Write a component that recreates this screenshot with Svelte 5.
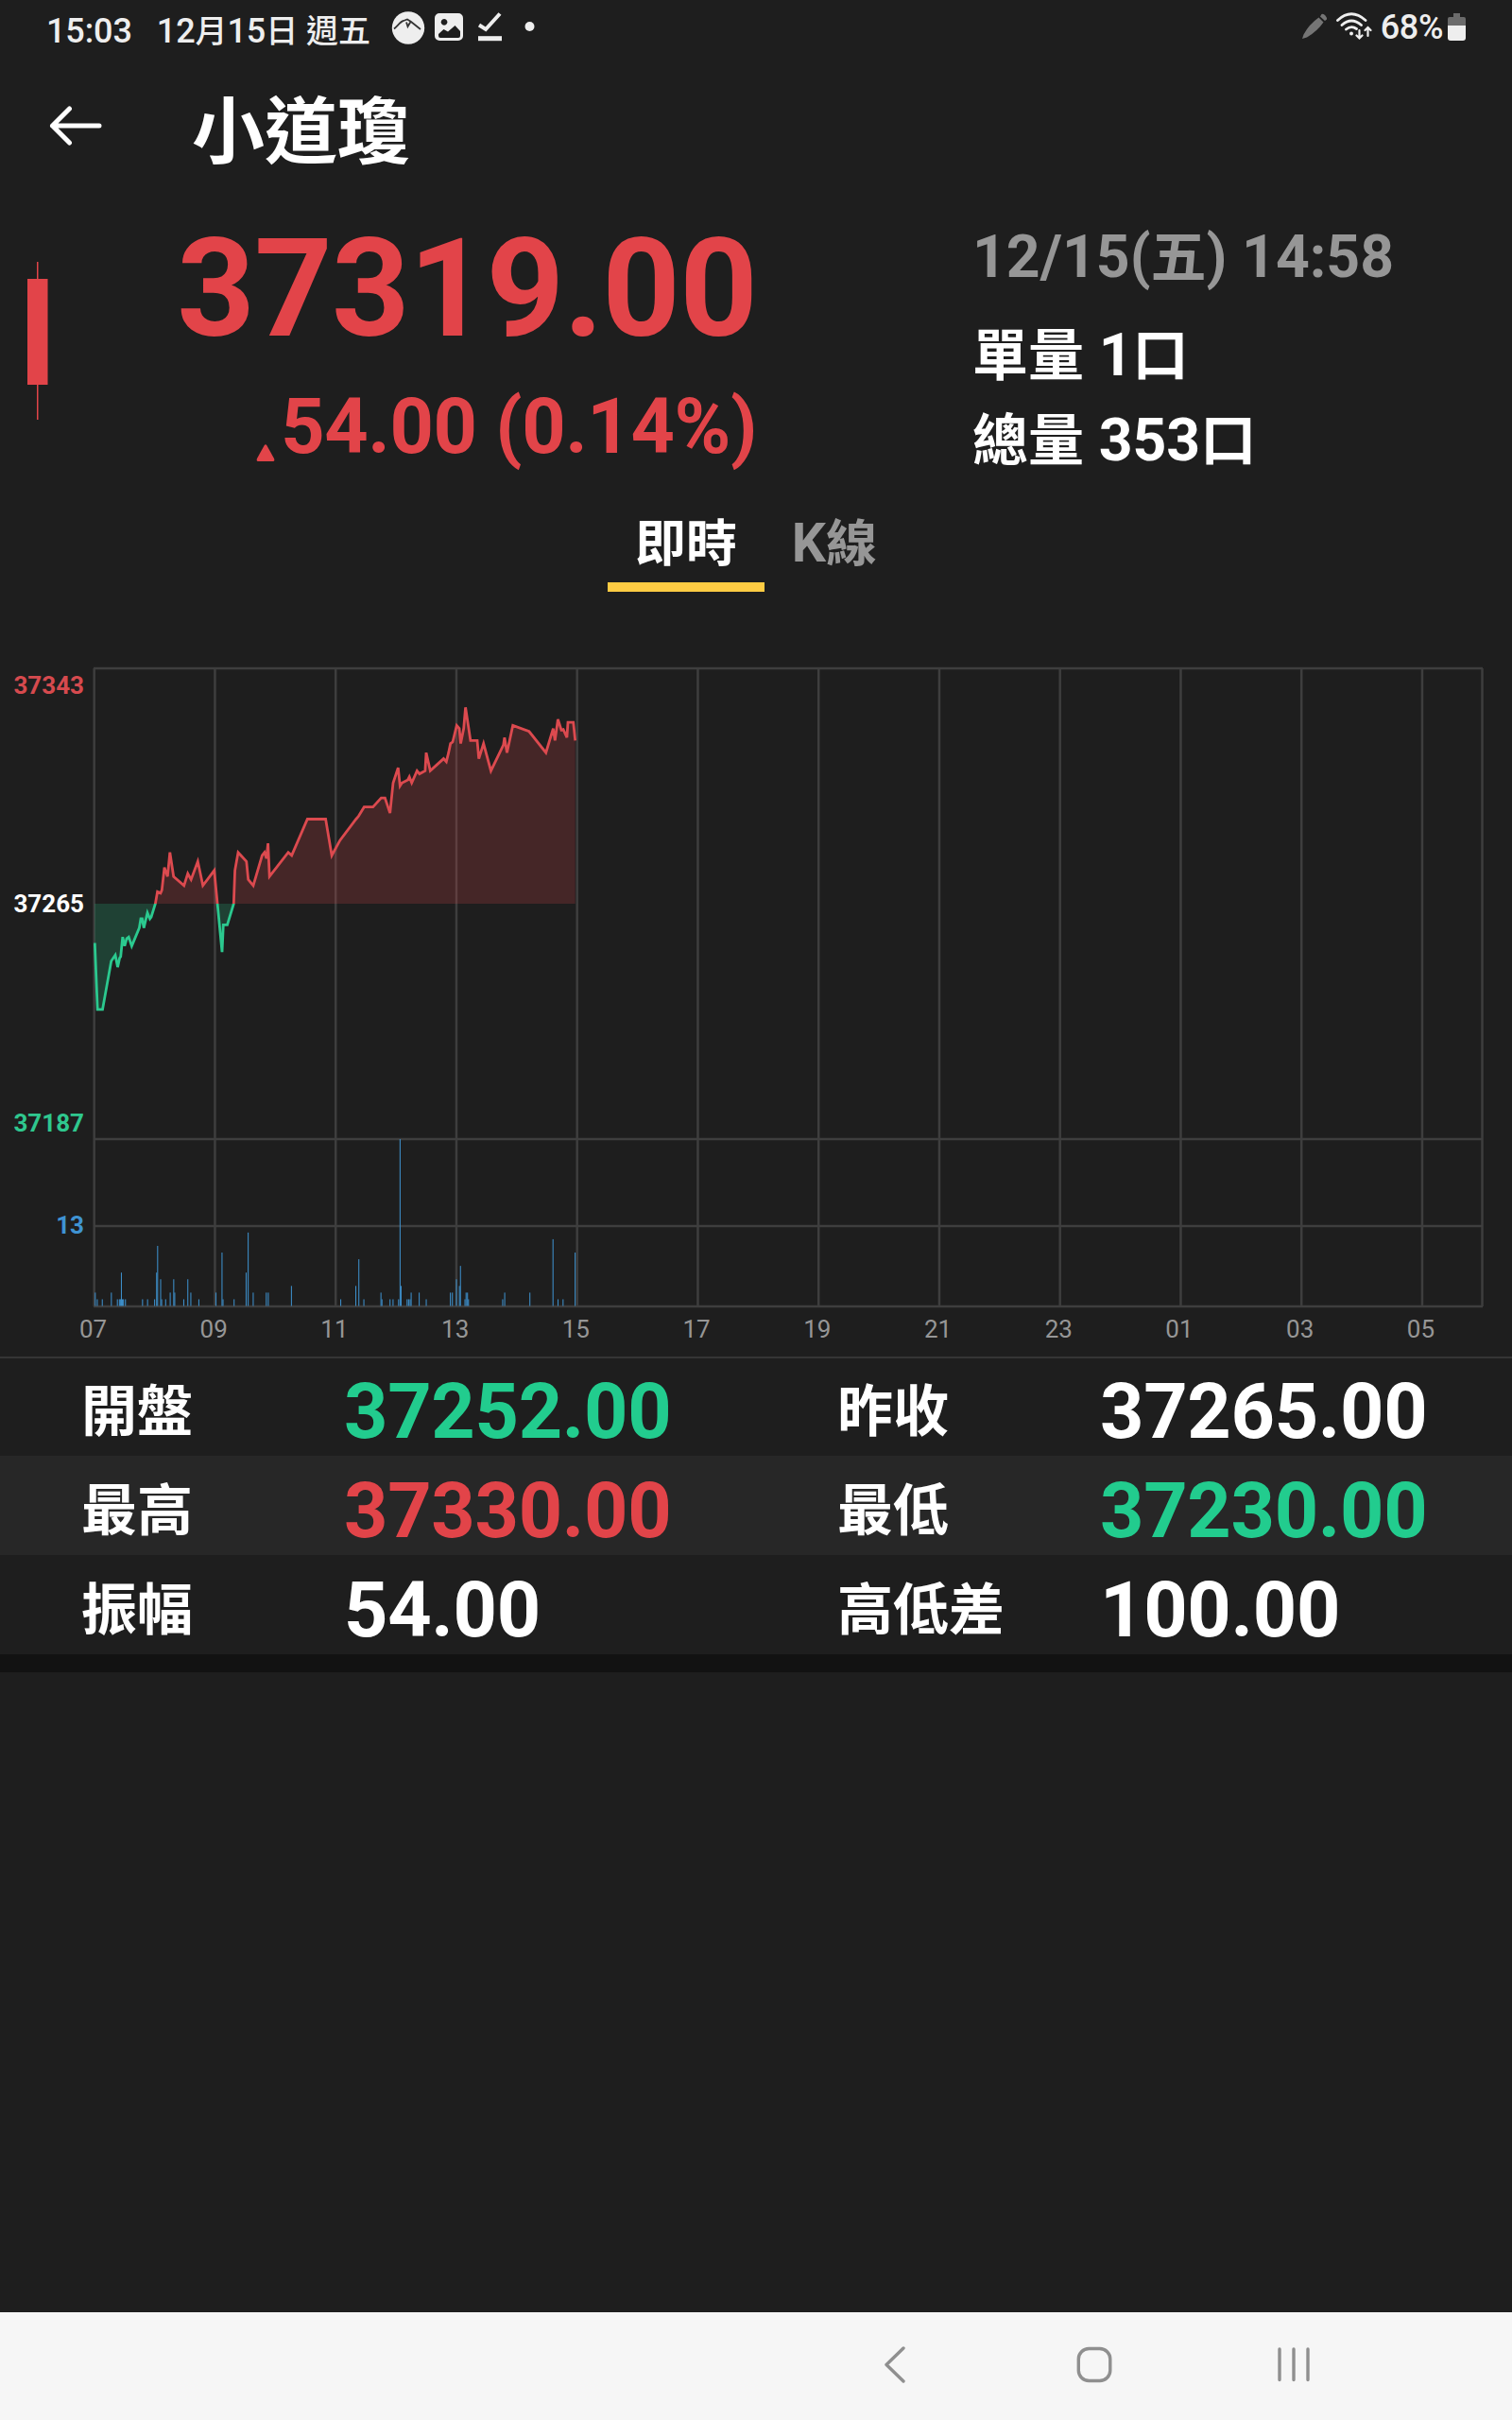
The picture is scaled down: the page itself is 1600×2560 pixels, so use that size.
<script lang="ts">
	type Cell = { label: string; value: string; tone?: 'up' | 'down' };

	const rows: Cell[][] = [
		[
			{ label: '開盤', value: '37252.00', tone: 'down' },
			{ label: '昨收', value: '37265.00' }
		],
		[
			{ label: '最高', value: '37330.00', tone: 'up' },
			{ label: '最低', value: '37230.00', tone: 'down' }
		],
		[
			{ label: '振幅', value: '54.00' },
			{ label: '高低差', value: '100.00' }
		]
	];

	const hours = ['07', '09', '11', '13', '15', '17', '19', '21', '23', '01', '03', '05'];

	// [minutes since 07:00, price - 37000]
	const prices: [number, number][] = [
		[0.3, 252], [3, 230], [8, 230], [16.6, 246], [20.7, 248], [23, 244], [25, 247], [26, 247.5],
		[28, 254], [30, 251], [32, 253.5], [34, 254], [37, 251], [44.5, 257], [46, 260], [47.4, 260],
		[49, 257], [52.6, 262], [55, 260], [56.4, 260.6], [60.5, 265], [62.6, 269], [65.7, 268.5],
		[67, 269.5], [69.5, 277], [72.6, 274], [75, 282], [78.6, 274], [89, 271], [92.7, 275],
		[96, 273], [102.7, 279], [107.7, 271], [119, 276], [126.8, 249], [128, 258], [132, 258],
		[138.4, 265], [139.6, 276], [142.8, 282], [151, 279], [152.8, 273], [157.8, 271],
		[166.6, 281], [169, 282], [171, 280], [172.5, 285], [174, 274], [192.6, 282], [196, 281],
		[211.6, 293], [229.8, 293], [235.9, 281], [244, 286], [260, 293], [262.5, 294], [268, 297],
		[276.8, 297], [285, 300], [288.7, 300], [293.7, 295], [296.8, 305], [301.8, 310],
		[303.7, 304], [305.6, 305], [311.5, 306], [313, 307], [315.3, 305], [320.6, 309], [323, 308],
		[328.7, 309], [329.7, 315], [333.7, 309], [347, 313], [349.7, 312], [352, 315],
		[353.8, 318], [356, 318.5], [360, 324], [362.6, 323], [364, 318], [367, 323], [368.8, 330],
		[373.8, 319], [380.4, 319], [382, 313], [386.7, 318], [394, 309], [406.4, 317.5],
		[407.6, 320], [410, 315], [415.8, 324], [432, 322], [448.7, 315], [455.9, 323],
		[457.7, 319], [460.6, 326], [464, 322.5], [466, 322.7], [469.6, 320], [470.6, 325],
		[476, 325], [477.8, 319]
	];

	// [minutes since 07:00, contracts]
	const volumes: [number, number][] = [
		[1, 3], [3, 2], [8, 2], [17, 3], [23, 2], [25, 2], [26, 2], [27, 6], [28, 2], [29, 2],
		[31, 2], [48, 2], [53, 2], [60, 2], [62, 6], [63, 10], [66, 5], [67, 2], [71, 2], [75.5, 3],
		[79, 5], [80, 3], [89, 2], [93, 5], [96, 3], [104, 2], [121, 3], [127, 9], [128, 2],
		[139, 2], [151, 6], [153, 12], [158, 3], [171, 3], [173, 3], [196, 4], [245, 2], [260, 4],
		[263, 8], [268, 2], [285, 3], [286, 2], [294, 2], [297, 2], [302.5, 2], [304, 26],
		[305, 4], [311, 2], [312.5, 2], [314, 2], [315, 3], [323, 3], [330, 2], [354, 3],
		[356, 3], [360, 5], [363, 4], [364, 7], [368.5, 2], [369.6, 3], [371, 3], [372, 2],
		[406, 2], [408, 3], [433, 3], [456, 11], [461, 2], [466, 2], [478, 9]
	];

	const left = 100;
	const right = 1569;
	const top = 17;
	const base = 266;
	const mid = 515;
	const bottom = 692;

	const x = (t: number) => left + t * 1.0646;
	const y = (p: number) => base - (p - 265) * 3.196;

	const points = prices.map(([t, p]) => `${x(t).toFixed(1)},${y(p).toFixed(1)}`).join(' ');
	const area = `${left},${base} ${points} ${x(477.8).toFixed(1)},${base}`;
</script>

<div class="screen">
	<div class="status">
		<div class="status-left">
			<span class="clock">15:03</span>
			<span>12<i>月</i>15<i>日</i> <i>週五</i></span>
			<svg class="status-icons" viewBox="0 0 154 36">
				<circle cx="18" cy="18.5" r="17.2" fill="#eee" />
				<path
					d="M3 19.500C8 15 10 11.500 13 11L17 9.500 21 12 31 20M20.500 12 17.500 17 16 12.500"
					fill="none"
					stroke="#333"
					stroke-width="1.800"
				/>
				<path
					fill-rule="evenodd"
					fill="#eee"
					d="M51 3H71a5 5 0 0 1 5 5V27a5 5 0 0 1-5 5H51a5 5 0 0 1-5-5V8a5 5 0 0 1 5-5ZM56 9a3.4 3.4 0 1 0 .1 0ZM50 25V27a2 2 0 0 0 2 2H71a2 2 0 0 0 2-2V22L67.500 16 60 22.500 55.500 20Z"
				/>
				<path d="M93 15.500 100 20 115 3.500" fill="none" stroke="#eee" stroke-width="4" />
				<path d="M92 29.700H117" stroke="#eee" stroke-width="5" />
				<circle cx="146.500" cy="17" r="5" fill="#eee" />
			</svg>
		</div>
		<div class="status-right">
			<svg class="pen" viewBox="0 0 28 28">
				<path d="M1 27 2.500 22.500Q8 12 18.500 4.500L23.500 9.500Q17 19 6 25.500ZM20 3.500l1.500-2.500q2-1 4 1.500t1.500 4L25 8Z" fill="#757575" />
			</svg>
			<svg class="wifi" viewBox="0 0 38 30" fill="none" stroke="#eee" stroke-width="2.800" stroke-linecap="round">
				<path d="M1.500 8.500Q16-5 31 8.500M6 13.500Q16 4.500 26.500 13.500M10.500 18Q16 13.500 21.500 17.500" />
				<circle cx="16" cy="22.500" r="2" fill="#eee" stroke="none" />
				<path d="M24.500 19V27M21.500 24.500 24.500 27.500 27.500 24.500M33.500 25V17M30.500 19 33.500 16 36.500 19" stroke-width="2.200" />
			</svg>
			<span>68%</span>
			<svg class="battery" viewBox="0 0 19 29">
				<path d="M6 0H13V4H17a2 2 0 0 1 2 2V13H0V6a2 2 0 0 1 2-2H6Z" fill="#6b6b6b" />
				<path d="M0 13H19V26a3 3 0 0 1-3 3H3a3 3 0 0 1-3-3Z" fill="#eee" />
			</svg>
		</div>
	</div>

	<header class="header">
		<svg class="back" viewBox="0 0 56 44" fill="none" stroke="#fff" stroke-width="5" stroke-linecap="round" stroke-linejoin="round">
			<path d="M53 22H3.500M21.500 4 3.500 22 21.500 40" />
		</svg>
		<h1>小道瓊</h1>
	</header>

	<section class="quote">
		<svg class="candle" viewBox="0 0 22 168" fill="#e24449">
			<rect x="10" y="0" width="1.500" height="167" />
			<rect x="0" y="18" width="21.500" height="112" />
		</svg>
		<div class="last up">
			<div class="price">37319.00</div>
			<div class="change">
				<svg viewBox="0 0 20 18"><path d="M8.500 1.500Q10-1 11.500 1.500L19 15Q20 18 18 18H2Q0 18 1 15Z" fill="#e24449" /></svg>
				<span>54.00 (0.14%)</span>
			</div>
		</div>
		<div class="info">
			<div class="time">12/15(<i>五</i>) 14:58</div>
			<div><i>單量</i> 1<i>口</i></div>
			<div><i>總量</i> 353<i>口</i></div>
		</div>
	</section>

	<nav class="tabs">
		<div class="tab active"><i>即時</i></div>
		<div class="tab">K<i>線</i></div>
	</nav>

	<svg class="chart" viewBox="0 0 1600 745">
		<clipPath id="above"><rect x={left} y={top} width={right - left} height={base - top} /></clipPath>
		<clipPath id="below"><rect x={left - 1} y={base} width={right - left} height={mid - base} /></clipPath>

		<g class="grid">
			{#each hours as _, i}
				<path d="M{99.7 + i * 127.75} {top}V{bottom}" />
			{/each}
			<path d="M{right - 0.5} {top}V{bottom}" />
			{#each [top, mid, 607, bottom] as line}
				<path d="M99 {line}H{right}" />
			{/each}
		</g>

		<g clip-path="url(#above)">
			<polygon class="area rise" points={area} />
			<polyline class="line rise" {points} />
		</g>
		<g clip-path="url(#below)">
			<polygon class="area fall" points={area} />
			<polyline class="line fall" {points} />
		</g>

		<g class="volume">
			{#each volumes as [t, v]}
				<rect x={x(t) - 0.8} y={bottom - 0.5 - (v - 1) * 7.06} width="1.06" height={(v - 1) * 7.06} />
			{/each}
		</g>

		<g class="scale">
			<text x="89" y="44" fill="#d64a4e">37343</text>
			<text x="89" y="275" fill="#fff">37265</text>
			<text x="89" y="507" fill="#2fc78e">37187</text>
			<text x="89" y="615" fill="#3f93d2">13</text>
		</g>
		<g class="hours">
			{#each hours as hour, i}
				<text x={98.5 + i * 127.72} y="725">{hour}</text>
			{/each}
		</g>
	</svg>

	<section class="stats">
		{#each rows as row}
			<div class="row">
				{#each row as cell}
					<div class="cell">
						<span class="label">{cell.label}</span>
						<span class="value {cell.tone ?? ''}">{cell.value}</span>
					</div>
				{/each}
			</div>
		{/each}
	</section>

	<footer class="navbar">
		<svg viewBox="0 0 40 40"><path d="M29 3 11 20.500 29 38" /></svg>
		<svg viewBox="0 0 40 40"><rect x="3.300" y="3.500" width="33.500" height="34" rx="11" /></svg>
		<svg viewBox="0 0 40 40"><path d="M5 4V36.500M20 4V36.500M35 4V36.500" /></svg>
	</footer>
</div>

<style>
	:global(body) {
		background: #1e1e1e;
	}

	.screen {
		width: 1600px;
		height: 2560px;
		display: flex;
		flex-direction: column;
		overflow: hidden;
		background: #1e1e1e;
		color: #fff;
		font-family: Roboto, 'Noto Sans CJK TC', sans-serif;
		font-weight: 500;
	}

	i {
		font-style: normal;
		font-size: 0.945em;
		line-height: 1;
	}

	svg {
		display: block;
		flex-shrink: 0;
	}

	.up {
		color: #e24449;
	}

	.down {
		color: #22cc8e;
	}

	.status {
		height: 66px;
		display: flex;
		justify-content: space-between;
		padding: 0 49px 0 49px;
		color: #eee;
		font-size: 36px;
		line-height: 66px;
		white-space: nowrap;
	}

	.status-left {
		display: flex;
		letter-spacing: -0.1px;
	}

	.clock {
		margin-right: 26px;
	}

	.status-icons {
		width: 154px;
		height: 36px;
		margin: 11px 0 0 22px;
	}

	.status-right {
		display: flex;
		line-height: 59px;
	}

	.status-right span {
		letter-spacing: -0.4px;
	}

	.pen {
		width: 28px;
		height: 28px;
		margin: 14px 9px 0 0;
	}

	.wifi {
		width: 38px;
		height: 30px;
		margin: 13px 9px 0 0;
	}

	.battery {
		width: 19px;
		height: 29px;
		margin: 14px 0 0 5px;
	}

	.header {
		height: 133px;
		display: flex;
		align-items: center;
		padding-left: 52px;
	}

	.back {
		width: 56px;
		height: 44px;
	}

	h1 {
		margin: 0 0 0 95px;
		padding-top: 17px;
		font-size: 77px;
		font-weight: 700;
		line-height: 90px;
	}

	.quote {
		height: 341px;
		display: flex;
	}

	.candle {
		width: 22px;
		height: 168px;
		margin: 78px 0 0 29px;
	}

	.last {
		width: 750px;
		padding-top: 47px;
		text-align: right;
		font-weight: 700;
		letter-spacing: -0.006em;
	}

	.price {
		font-size: 144px;
		line-height: 120px;
		letter-spacing: -0.8px;
	}

	.change {
		display: flex;
		justify-content: flex-end;
		margin-top: 36px;
		font-size: 81px;
		line-height: 100px;
		letter-spacing: -0.4px;
	}

	.change svg {
		width: 20px;
		height: 18px;
		margin: 68px 6px 0 0;
	}

	.info {
		margin-left: 228px;
		padding-top: 28px;
		font-size: 62.5px;
		line-height: 90px;
		font-weight: 700;
	}

	.time {
		margin-bottom: 14px;
		color: #969696;
	}

	.tabs {
		display: flex;
		justify-content: center;
		height: 86px;
		font-size: 57px;
		line-height: 69px;
		font-weight: 700;
	}

	.tab {
		box-sizing: border-box;
		padding: 0 29px;
		border-bottom: 10px solid transparent;
		color: #969696;
	}

	.tab.active {
		color: #fff;
		border-color: #ffcc43;
	}

	.chart {
		width: 1600px;
		height: 745px;
		margin-top: 64px;
	}

	.grid {
		stroke: #3e3e3e;
		stroke-width: 2.5;
	}

	.area {
		opacity: 0.2;
	}

	.area.rise {
		fill: #e24449;
	}

	.area.fall {
		fill: #22cc8e;
	}

	.line {
		fill: none;
		stroke-width: 2.8;
	}

	.line.rise {
		stroke: #dc4a4f;
	}

	.line.fall {
		stroke: #2bc98f;
	}

	.volume {
		fill: #3d8ec9;
	}

	.scale {
		font-size: 26px;
		font-weight: 700;
		text-anchor: end;
	}

	.hours {
		fill: #969696;
		font-size: 26px;
		font-weight: 400;
		text-anchor: middle;
	}

	.stats {
		border-top: 2px solid #353535;
		border-bottom: 19px solid #121212;
	}

	.row {
		height: 105px;
		display: flex;
	}

	.row:first-child {
		height: 103px;
	}

	.row:nth-child(even) {
		background: #272727;
	}

	.cell {
		width: 800px;
		box-sizing: border-box;
		display: flex;
		padding: 12px 0 0 86px;
		line-height: 93px;
	}

	.row:first-child .cell {
		padding-top: 10px;
	}

	.label {
		width: 278px;
		font-size: 59px;
		font-weight: 700;
	}

	.value {
		font-size: 81px;
		font-weight: 700;
		letter-spacing: -0.3px;
	}

	.navbar {
		display: flex;
		justify-content: flex-end;
		gap: 171px;
		height: 114px;
		margin-top: auto;
		padding-right: 211px;
		box-sizing: border-box;
		background: #f6f6f6;
	}

	.navbar svg {
		width: 40px;
		height: 40px;
		margin-top: 35px;
		fill: none;
		stroke: #8f8f8f;
		stroke-width: 3.4;
		stroke-linecap: round;
		stroke-linejoin: round;
	}
</style>
